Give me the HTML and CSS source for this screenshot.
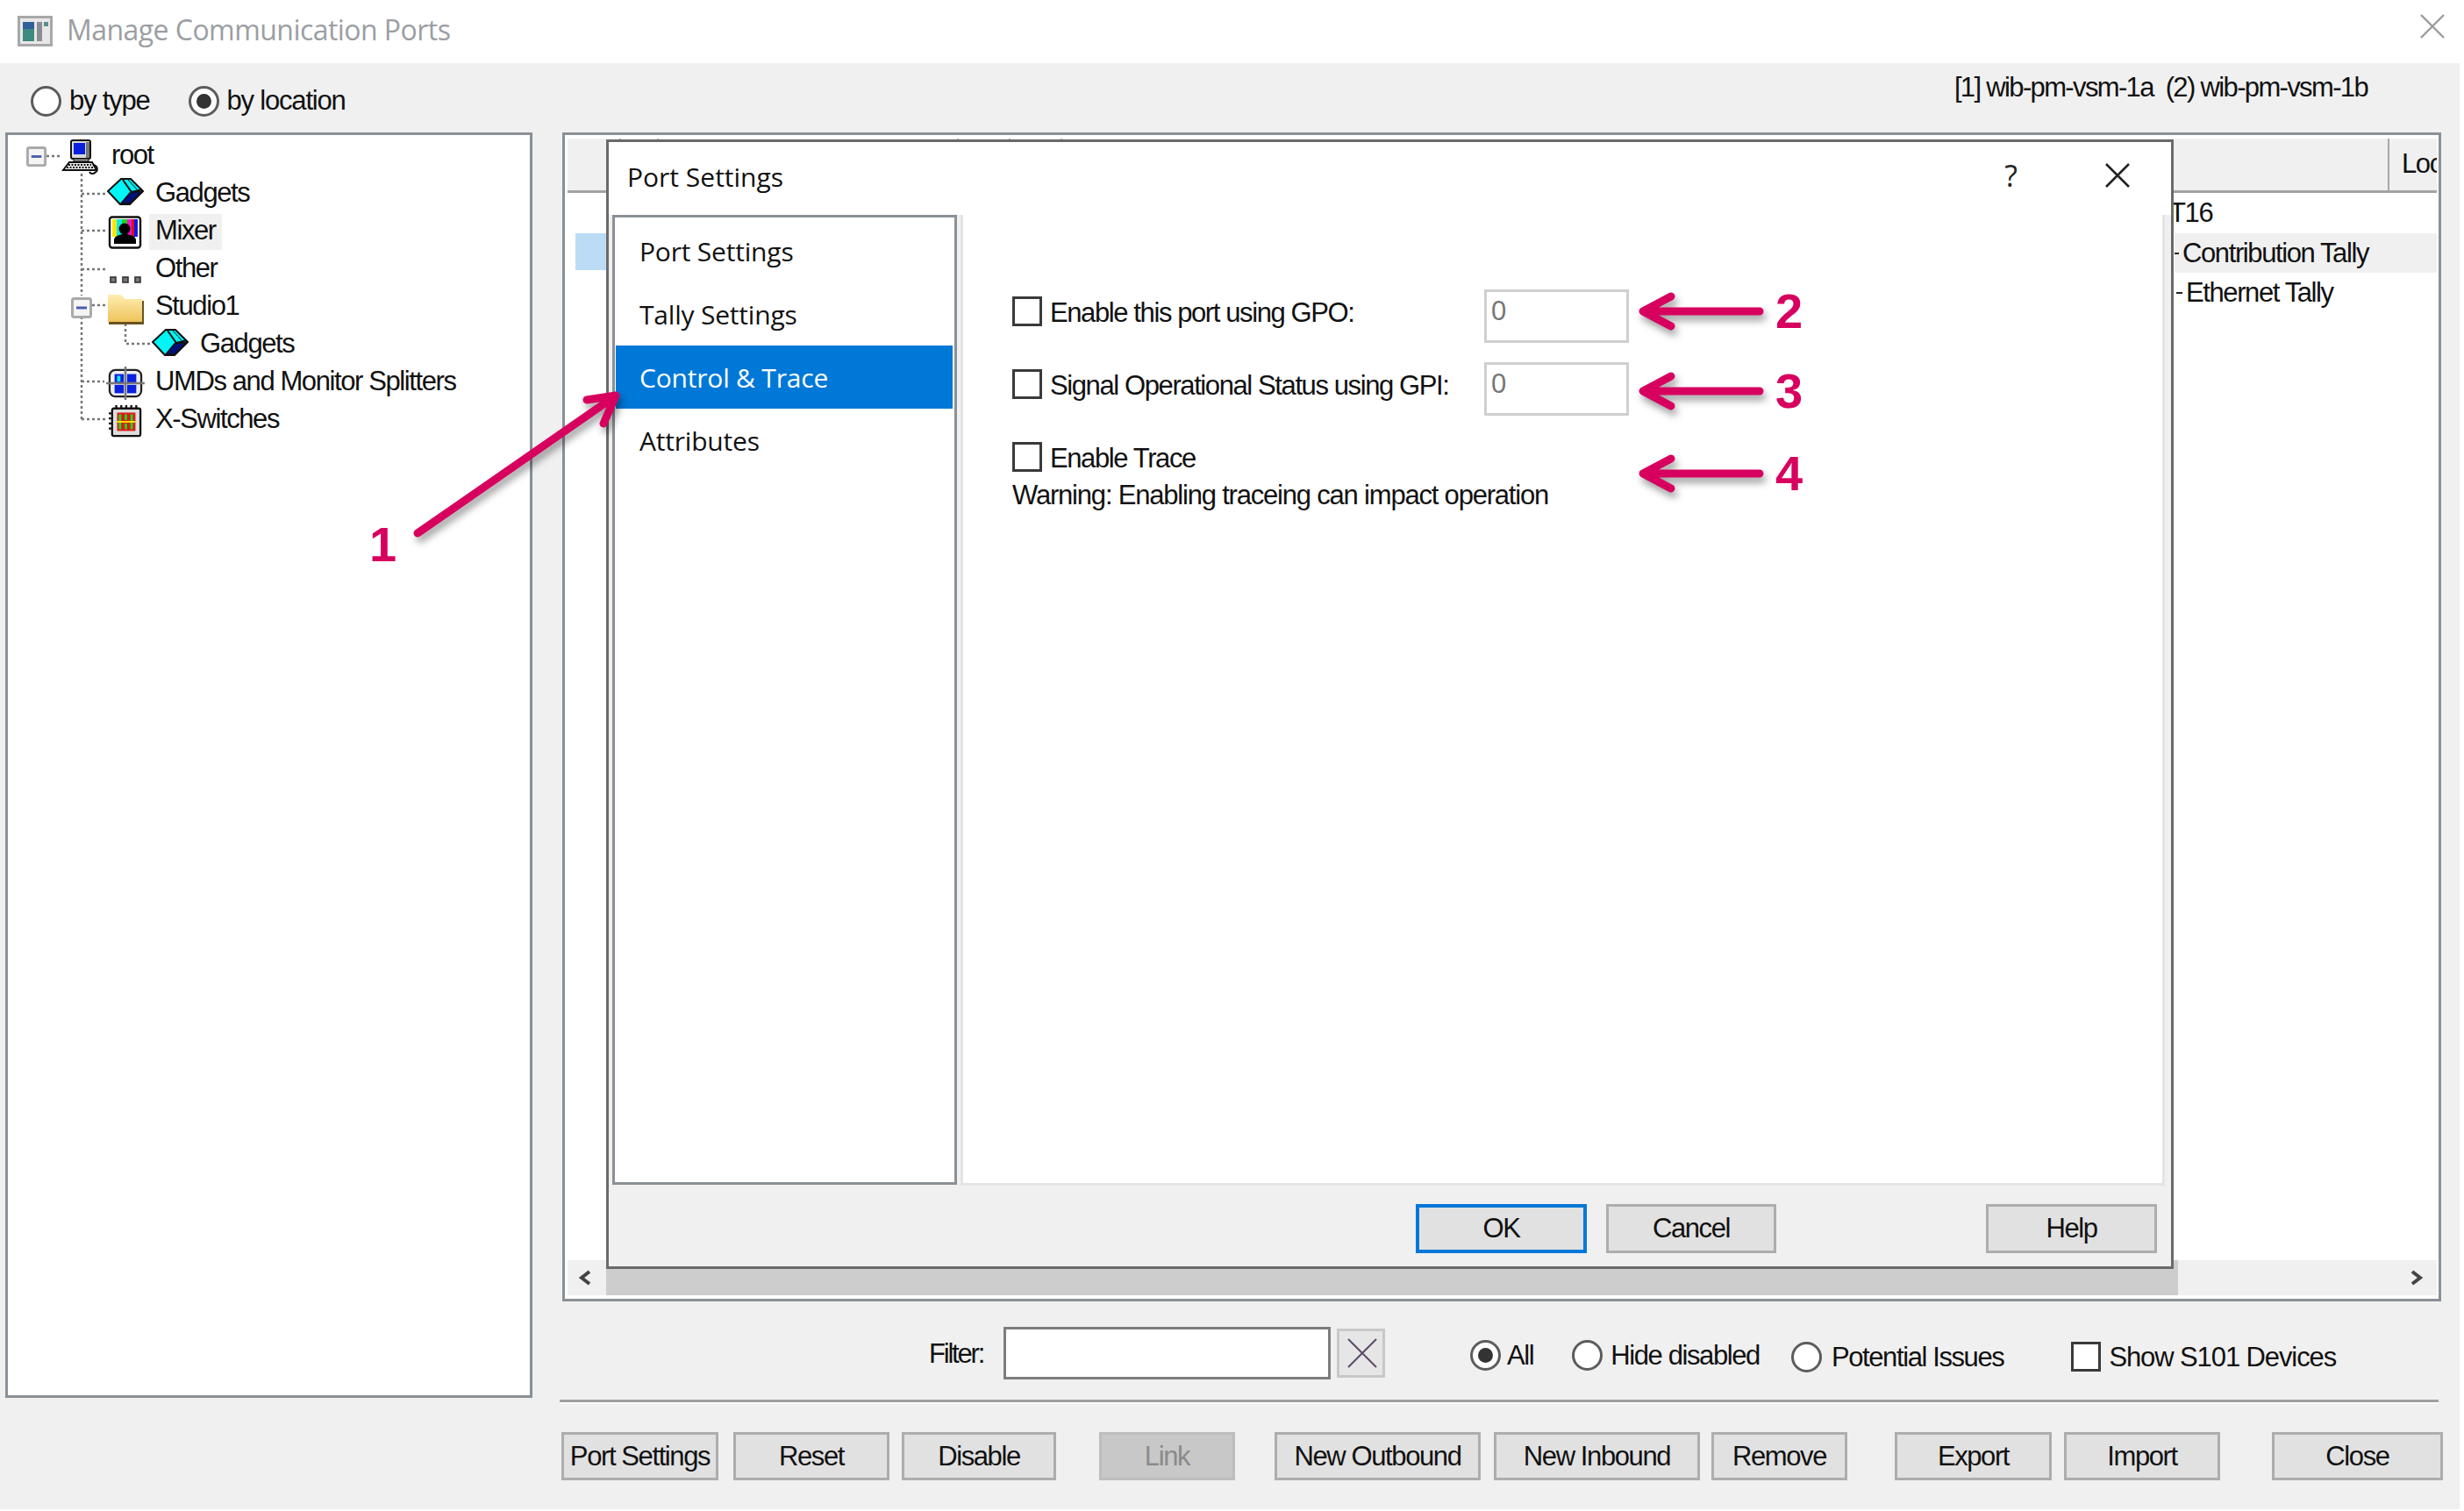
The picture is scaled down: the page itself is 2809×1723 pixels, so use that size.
FILE: index.html
```html
<!DOCTYPE html>
<html lang="en">
<head>
<meta charset="utf-8">
<title>Manage Communication Ports</title>
<link rel="stylesheet" href="styles.css">
</head>
<body>
<svg class="defs" width="0" height="0">
  <symbol id="cube" viewBox="0 0 42 31">
    <polygon points="1,15 16,1 27,1 41,15 26,30 15,30" fill="#00f5f5" stroke="#111" stroke-width="2"/>
    <polygon points="16,29 26,17 40,15 26,29" fill="#00107a" stroke="#111" stroke-width="1.5"/>
    <polyline points="18,2 28,16 40,13" fill="none" stroke="#111" stroke-width="2"/>
    <line x1="24" y1="2" x2="34" y2="13" stroke="#111" stroke-width="1"/>
  </symbol>
  <symbol id="toggle" viewBox="0 0 24 24">
    <rect x="1.5" y="1.5" width="21" height="21" rx="2" fill="#f4f4f4" stroke="#a9a9a9" stroke-width="3"/>
    <rect x="6" y="10.5" width="12" height="3" fill="#4a5db0"/>
  </symbol>
</svg>

<header class="titlebar">
  <svg class="app-icon" viewBox="0 0 40 35">
    <rect x="1.5" y="1.5" width="37" height="32" fill="#e8e8e8" stroke="#a8a8a8" stroke-width="3"/>
    <rect x="6" y="7" width="13" height="22" fill="#3f8a7e"/>
    <rect x="6" y="7" width="13" height="8" fill="#33609a"/>
    <rect x="22" y="7" width="6" height="22" fill="#8c8c96"/>
    <rect x="30" y="7" width="5" height="5" fill="#5d8f86"/>
  </svg>
  <span class="title-text">Manage Communication Ports</span>
  <svg class="win-close" viewBox="0 0 28 28"><path d="M1 1L27 27M27 1L1 27" stroke="#9a9a9a" stroke-width="2.4" fill="none"/></svg>
</header>

<div class="window">
  <div class="toprow">
    <span class="radio"></span><span class="label top-label gap-type">by type</span>
    <span class="radio on"></span><span class="label top-label gap-loc">by location</span>
    <span class="label servers">[1] wib-pm-vsm-1a&nbsp; (2) wib-pm-vsm-1b</span>
  </div>

  <div class="main">
    <nav class="tree">
      <svg class="tree-lines" viewBox="9 154 400 400">
        <path d="M53 178H70M93 198V337M93 361V478M93 221H122M93 263H122M93 307H122M105 348H123M143 369V392H173M93 435H119M93 478H123" fill="none" stroke="#777" stroke-width="2.5" stroke-dasharray="3 3"/>
      </svg>
      <div class="node root">
        <svg class="toggle"><use href="#toggle"/></svg>
        <svg class="ic-root" viewBox="0 0 43 42">
          <rect x="11" y="2" width="22" height="21" rx="2" fill="#d9d9d9" stroke="#111" stroke-width="2"/>
          <rect x="14" y="5" width="13" height="13" fill="#0a20e0"/>
          <rect x="28" y="4" width="4" height="18" fill="#777"/>
          <rect x="14" y="23" width="17" height="3" fill="#999" stroke="#111"/>
          <path d="M9 27H35L40 36H2Z" fill="#eee" stroke="#111" stroke-width="2"/>
          <path d="M8 30H34M6 33H37" stroke="#111" stroke-width="2" stroke-dasharray="2 1.5"/>
          <path d="M36 30C42 31 42 37 38 39C36 41 33 40 32 38" fill="none" stroke="#111" stroke-width="2"/>
        </svg>
        <span class="label tree-label">root</span>
      </div>
      <div class="node lvl1">
        <svg class="slot"><use href="#cube" x="2" y="0" width="42" height="31"/></svg>
        <span class="label tree-label">Gadgets</span>
      </div>
      <div class="node lvl1">
        <svg class="slot" viewBox="0 0 46 38">
          <rect x="5" y="1.5" width="35" height="35" rx="3" fill="#fff" stroke="#111" stroke-width="2.4"/>
          <rect x="8" y="4" width="5" height="20" fill="#ffe600"/><rect x="13" y="4" width="6" height="20" fill="#10e8e8"/>
          <rect x="19" y="4" width="6" height="20" fill="#18d818"/><rect x="25" y="4" width="5" height="20" fill="#f010d0"/>
          <rect x="30" y="4" width="3" height="20" fill="#e01010"/><rect x="33" y="4" width="4" height="20" fill="#1018e8"/>
          <circle cx="22" cy="15" r="6.5" fill="#000"/>
          <path d="M10 32V27C11 23 16 22 19 21H25C29 22 34 23 35 27V32Z" fill="#000"/>
        </svg>
        <span class="hilite"><span class="label tree-label">Mixer</span></span>
      </div>
      <div class="node lvl1">
        <svg class="slot" viewBox="0 0 46 38">
          <g fill="#777" stroke="#333" stroke-width="1.6"><rect x="6" y="27" width="6" height="6"/><rect x="20" y="27" width="6" height="6"/><rect x="34" y="27" width="6" height="6"/></g>
        </svg>
        <span class="label tree-label">Other</span>
      </div>
      <div class="node with-toggle">
        <svg class="toggle sub"><use href="#toggle"/></svg>
        <svg class="slot" viewBox="0 -3 46 38">
          <defs><linearGradient id="fold" x1="0" y1="0" x2="0" y2="1"><stop offset="0" stop-color="#fdeeb0"/><stop offset="1" stop-color="#efc35c"/></linearGradient></defs>
          <path d="M4 3H19L23 8H44V35H4Z" fill="#6a5320"/>
          <path d="M3 1H18L22 6H42V32H3Z" fill="url(#fold)"/>
        </svg>
        <span class="label tree-label">Studio1</span>
      </div>
      <div class="node lvl2">
        <svg class="slot"><use href="#cube" x="2" y="0" width="42" height="31"/></svg>
        <span class="label tree-label">Gadgets</span>
      </div>
      <div class="node lvl1">
        <svg class="slot" viewBox="0 0 46 40">
          <rect x="4" y="4" width="38" height="32" rx="7" fill="#eee" stroke="#222" stroke-width="2.4"/>
          <rect x="10" y="9" width="11" height="10" fill="#0a20e0"/><rect x="25" y="9" width="11" height="10" fill="#0a20e0"/>
          <rect x="10" y="22" width="11" height="10" fill="#0a20e0"/><rect x="25" y="22" width="11" height="10" fill="#0a20e0"/>
          <rect x="13" y="11" width="4" height="7" fill="#10e8e8"/>
          <path d="M23 0V40M0 20H46" stroke="#777" stroke-width="2.6"/>
        </svg>
        <span class="label tree-label">UMDs and Monitor Splitters</span>
      </div>
      <div class="node lvl1">
        <svg class="slot" viewBox="0 0 46 40">
          <rect x="7" y="5" width="34" height="33" rx="2" fill="#ddd" stroke="#111" stroke-width="2.4"/>
          <path d="M12 1V5M18 1V5M24 1V5M30 1V5M36 1V5M3 11H7M3 17H7M3 23H7M3 29H7" stroke="#111" stroke-width="2.4"/>
          <rect x="13" y="10" width="22" height="22" fill="#e01818"/>
          <g fill="#20d820"><rect x="15" y="12" width="3" height="18"/><rect x="22" y="12" width="3" height="7"/><rect x="22" y="23" width="3" height="7"/><rect x="29" y="12" width="3" height="18"/></g>
          <path d="M13 21H35" stroke="#ffe600" stroke-width="2"/>
        </svg>
        <span class="label tree-label">X-Switches</span>
      </div>
    </nav>

    <div class="content">
      <section class="list">
        <div class="list-head">
          <span class="col c1"></span><span class="col c2"></span><span class="col c3"></span>
          <span class="col c4"></span><span class="col c5"></span><span class="col c6"></span>
          <span class="col-last"><span class="label">Loc</span></span>
        </div>
        <div class="list-body">
          <div class="row r1"><span class="mark"></span><span class="cell"><span class="label t16">T16</span></span></div>
          <div class="row r2"><span class="mark sel"></span><span class="cell shade"><span class="stub"></span><span class="label">Contribution Tally</span></span></div>
          <div class="row r3"><span class="mark"></span><span class="cell"><span class="stub two"></span><span class="label">Ethernet Tally</span></span></div>
        </div>
        <div class="hscroll">
          <span class="arrow-cell"><svg class="chev" viewBox="0 0 17 18"><path d="M14 2L5 9L14 16" fill="none" stroke="#444" stroke-width="4"/></svg></span>
          <span class="thumb"></span>
          <span class="track"><svg class="chev" viewBox="0 0 17 18"><path d="M3 2L12 9L3 16" fill="none" stroke="#444" stroke-width="4"/></svg></span>
        </div>

        <div class="dialog">
          <div class="dlg-title">
            <span class="dlg-title-text">Port Settings</span>
            <span class="dlg-help">?</span>
            <svg class="dlg-close" viewBox="0 0 28 28"><path d="M1 1L27 27M27 1L1 27" stroke="#222" stroke-width="2.6" fill="none"/></svg>
          </div>
          <div class="dlg-body">
            <ul class="dlg-nav">
              <li class="nav-item">Port Settings</li>
              <li class="nav-item">Tally Settings</li>
              <li class="nav-item active">Control &amp; Trace</li>
              <li class="nav-item">Attributes</li>
            </ul>
            <div class="dlg-panel">
              <div class="form">
                <div class="check-line"><span class="check"></span><span class="label form-label">Enable this port using GPO:</span></div>
                <div class="num"><span class="label">0</span></div>
                <div class="check-line"><span class="check"></span><span class="label form-label">Signal Operational Status using GPI:</span></div>
                <div class="num"><span class="label">0</span></div>
                <div class="check-line"><span class="check"></span><span class="label form-label">Enable Trace</span></div>
                <div></div>
              </div>
              <p class="warning label">Warning: Enabling traceing can impact operation</p>
            </div>
          </div>
          <div class="dlg-foot">
            <button class="btn b-ok">OK</button>
            <button class="btn b-cancel">Cancel</button>
            <button class="btn b-help">Help</button>
          </div>
        </div>
      </section>

      <div class="filter-row">
        <span class="label filter-label">Filter:</span>
        <span class="filter-input"></span>
        <span class="filter-clear"><svg viewBox="0 0 34 34"><path d="M1 1L33 33M33 1L1 33" stroke="#5a4a68" stroke-width="2" fill="none"/></svg></span>
        <span class="radio on r-all"></span><span class="label t-all">All</span>
        <span class="radio r-hide"></span><span class="label t-hide">Hide disabled</span>
        <span class="radio r-pot"></span><span class="label t-pot">Potential Issues</span>
        <span class="check c-s101"></span><span class="label t-s101">Show S101 Devices</span>
      </div>

      <div class="separator"></div>

      <div class="actions">
        <button class="btn a-port">Port Settings</button>
        <button class="btn a-reset">Reset</button>
        <button class="btn a-disable">Disable</button>
        <button class="btn a-link" disabled>Link</button>
        <button class="btn a-out">New Outbound</button>
        <button class="btn a-in">New Inbound</button>
        <button class="btn a-remove">Remove</button>
        <button class="btn a-export">Export</button>
        <button class="btn a-import">Import</button>
        <button class="btn a-close">Close</button>
      </div>
    </div>
  </div>
</div>

<svg class="callouts" viewBox="0 0 2809 1723">
  <g class="callout-lines" fill="none" stroke="#d8005f" stroke-width="9" stroke-linecap="round" stroke-linejoin="round">
    <path d="M476 608L698 454M669 456L702 451L688 483"/>
    <path d="M1876 355H2006M1905 338L1873 355L1905 372"/>
    <path d="M1876 446H2006M1905 429L1873 446L1905 463"/>
    <path d="M1876 540H2006M1905 523L1873 540L1905 557"/>
  </g>
</svg>
<span class="num-call n1">1</span>
<span class="num-call n2">2</span>
<span class="num-call n3">3</span>
<span class="num-call n4">4</span>
</body>
</html>
```

FILE: styles.css
```css
* { box-sizing: border-box; }
html, body { margin: 0; padding: 0; }
body {
  position: relative;
  width: 2809px;
  height: 1723px;
  overflow: hidden;
  background: #fff;
  color: #111;
  font-family: "Liberation Sans", Arial, sans-serif;
  font-size: 31px;
  letter-spacing: -1.4px;
}
.defs { position: absolute; }
.label { white-space: nowrap; line-height: 36px; }

/* title bar */
.titlebar { height: 72px; display: flex; align-items: center; padding: 0 21px 0 20px; }
.app-icon { width: 40px; height: 35px; margin-top: -1px; }
.title-text {
  margin: -5px 0 0 16px;
  font-family: "Open Sans", sans-serif;
  font-size: 32px;
  letter-spacing: -0.55px;
  color: #9b9ea3;
}
.win-close { width: 28px; height: 28px; margin-left: auto; margin-top: -12px; margin-right: 1px; }

/* window */
.window { width: 2804px; height: 1649px; background: #f0f0f0; display: flex; flex-direction: column; }
.toprow { height: 79px; display: flex; align-items: center; padding: 7px 105px 0 35px; }
.top-label { letter-spacing: -1.2px; }
.gap-type { margin: 0 44px 0 9px; }
.gap-loc { margin-left: 9px; }
.servers { margin-left: auto; margin-top: -30px; letter-spacing: -1.65px; }

.radio {
  flex: none;
  position: relative;
  width: 35px;
  height: 35px;
  border-radius: 50%;
  border: 3px solid #5c5c5c;
  background: #fff;
}
.radio.on::after {
  content: "";
  position: absolute;
  inset: 6px;
  border-radius: 50%;
  background: #333;
}
.check { flex: none; width: 34px; height: 34px; border: 3px solid #3a3a3a; background: #fff; }

.main { flex: 1; display: flex; align-items: flex-start; }

/* tree */
.tree {
  position: relative;
  width: 601px;
  height: 1443px;
  margin-left: 6px;
  padding-top: 3px;
  border: 3px solid #8a9098;
  background: #fff;
}
.tree-lines { position: absolute; left: 0; top: 0; width: 400px; height: 400px; }
.node { position: relative; height: 43px; display: flex; align-items: center; }
.root { padding-left: 21px; }
.lvl1 { padding-left: 111px; }
.lvl2 { padding-left: 162px; }
.with-toggle { padding-left: 72px; }
.toggle { flex: none; width: 23px; height: 23px; margin-right: 17px; }
.toggle.sub { width: 24px; height: 24px; margin-right: 15px; }
.ic-root { flex: none; width: 43px; height: 42px; margin-right: 14px; }
.slot { flex: none; width: 46px; height: 38px; margin-right: 11px; }
.tree-label { position: relative; top: -2px; }
.hilite { background: #f0f0f0; padding: 0 7px; margin-left: -7px; height: 41px; display: flex; align-items: center; }

/* right side */
.content { width: 2145px; margin-left: 33px; }
.list {
  position: relative;
  width: 2142px;
  height: 1333px;
  margin-left: 1px;
  padding: 4px 2px 4px 3px;
  border: 3px solid #8a9098;
  background: #fff;
  display: flex;
  flex-direction: column;
}
.list-head { flex: none; height: 62px; display: flex; background: #f0f0f0; border-bottom: 3px solid #a2a2a2; }
.col { flex: none; border-right: 2px solid #a8a8a8; }
.c1 { width: 61px; } .c2 { width: 43px; } .c3 { width: 342px; }
.c4 { width: 59px; } .c5 { width: 59px; } .c6 { width: 1513px; }
.col-last { flex: 1; overflow: hidden; padding: 11px 0 0 14px; }

.list-body { flex: 1; }
.row { display: flex; justify-content: space-between; }
.r1 { height: 46px; }
.r2, .r3 { height: 45px; }
.mark { width: 44px; margin-left: 9px; }
.mark.sel { background: #bcdcf5; height: 42px; }
.cell { width: 299px; display: flex; align-items: center; }
.cell.shade { background: #f0f0f0; }
.t16 { margin-left: -6px; }
.stub { flex: none; width: 5px; height: 2px; background: #222; margin-right: 4px; }
.stub.two { width: 7px; margin-left: 2px; margin-right: 4px; }

.hscroll { flex: none; height: 40px; display: flex; }
.arrow-cell { flex: none; width: 44px; background: #f0f0f0; display: flex; align-items: flex-end; padding: 0 0 11px 11px; }
.thumb { flex: none; width: 1792px; background: #cdcdcd; }
.track { flex: 1; background: #f0f0f0; display: flex; align-items: flex-end; justify-content: flex-end; padding: 0 14px 11px 0; }
.chev { width: 17px; height: 18px; }

/* dialog */
.dialog {
  position: absolute;
  left: 47px;
  top: 5px;
  width: 1787px;
  height: 1288px;
  border: 3px solid #6a6a6a;
  background: #f0f0f0;
  display: flex;
  flex-direction: column;
}
.dlg-title { flex: none; height: 83px; background: #fff; display: flex; align-items: center; padding: 0 47px 0 21px; }
.dlg-title-text { font-family: "Open Sans", sans-serif; font-size: 30px; letter-spacing: 0; margin-top: -4px; }
.dlg-help { margin-left: auto; font-family: "Open Sans", sans-serif; font-size: 34px; letter-spacing: 0; color: #222; margin-top: -8px; }
.dlg-close { width: 28px; height: 28px; margin-left: 100px; margin-top: -8px; }
.dlg-body { flex: none; height: 1107px; display: flex; padding: 0 7px 0 4px; }
.dlg-nav {
  flex: none;
  width: 393px;
  height: 1106px;
  margin: 0;
  padding: 2px 2px 0 1px;
  list-style: none;
  border: 3px solid #8a9098;
  background: #fff;
}
.nav-item {
  height: 72px;
  line-height: 73px;
  padding-left: 27px;
  font-family: "Open Sans", sans-serif;
  font-size: 30px;
  letter-spacing: -0.2px;
}
.nav-item.active { background: #0078d7; color: #fff; }
.dlg-panel {
  flex: 1;
  margin-left: 4px;
  background: #fff;
  border-left: 3px solid #e4e4e4;
  border-right: 3px solid #e4e4e4;
  border-bottom: 3px solid #e4e4e4;
  padding: 85px 0 0 56px;
}
.form { display: grid; grid-template-columns: 538px 165px; grid-auto-rows: 83px; }
.check-line { display: flex; align-items: center; gap: 9px; height: 50px; }
.form-label { position: relative; top: 2px; }
.num { height: 61px; border: 3px solid #cfcfcf; background: #fff; padding: 0 0 0 5px; color: #777; }
.num .label { line-height: 44px; display: block; }
.warning { margin: -32px 0 0; letter-spacing: -1.2px; }

.dlg-foot { flex: 1; padding: 21px 0 0 920px; display: flex; align-items: flex-start; }

.btn {
  flex: none;
  height: 55px;
  padding: 0;
  border: 3px solid #adadad;
  background: #e1e1e1;
  color: #111;
  font: inherit;
  letter-spacing: inherit;
}
.b-ok { width: 195px; height: 56px; border: 4px solid #0078d7; }
.b-cancel { width: 194px; height: 56px; margin-left: 22px; }
.b-help { width: 195px; height: 56px; margin-left: 239px; }

/* filter row */
.filter-row { height: 112px; padding: 6px 0 0 419px; display: flex; align-items: center; }
.filter-label { flex: none; width: 64px; margin-top: 2px; letter-spacing: -2.2px; }
.filter-input { flex: none; width: 373px; height: 60px; margin-left: 21px; border: 3px solid #7d7d7d; background: #fff; }
.filter-clear { flex: none; width: 55px; height: 56px; margin-left: 7px; padding: 8px 9px; border: 3px solid #c8c8c8; background: #e6e6e6; }
.filter-clear svg { display: block; width: 34px; height: 34px; }
.r-all { margin: 4px 0 0 97px; }
.t-all { margin: 6px 0 0 7px; }
.r-hide { margin: 4px 0 0 44px; }
.t-hide { margin: 6px 0 0 9px; }
.r-pot { margin: 8px 0 0 36px; }
.t-pot { margin: 10px 0 0 11px; }
.c-s101 { margin: 8px 0 0 77px; }
.t-s101 { margin: 10px 0 0 9px; letter-spacing: -1.1px; }

.separator { height: 5px; margin: 0 5px 0 -2px; border-top: 3px solid #a0a0a0; border-bottom: 2px solid #fff; }

/* actions */
.actions { display: flex; padding-top: 32px; }
.a-port { width: 179px; }
.a-reset { width: 178px; margin-left: 17px; }
.a-disable { width: 176px; margin-left: 14px; }
.a-link { width: 155px; margin-left: 49px; background: #c8c8c8; border-color: #bdbdbd; color: #8b8b8b; }
.a-out { width: 235px; margin-left: 45px; }
.a-in { width: 235px; margin-left: 15px; }
.a-remove { width: 155px; margin-left: 13px; }
.a-export { width: 179px; margin-left: 54px; }
.a-import { width: 178px; margin-left: 14px; }
.a-close { width: 195px; margin-left: 59px; }

/* annotations drawn over the screenshot */
.callouts { position: absolute; left: 0; top: 0; width: 2809px; height: 1723px; pointer-events: none; }
.callout-lines { filter: drop-shadow(3px 6px 4px rgba(0,0,0,.38)); }
.num-call {
  position: absolute;
  font-family: "Liberation Sans", sans-serif;
  font-weight: 700;
  font-size: 56px;
  letter-spacing: 0;
  line-height: 56px;
  color: #d8005f;
}
.n1 { left: 421px; top: 593px; }
.n2 { left: 2024px; top: 327px; }
.n3 { left: 2024px; top: 418px; }
.n4 { left: 2024px; top: 512px; }
```
